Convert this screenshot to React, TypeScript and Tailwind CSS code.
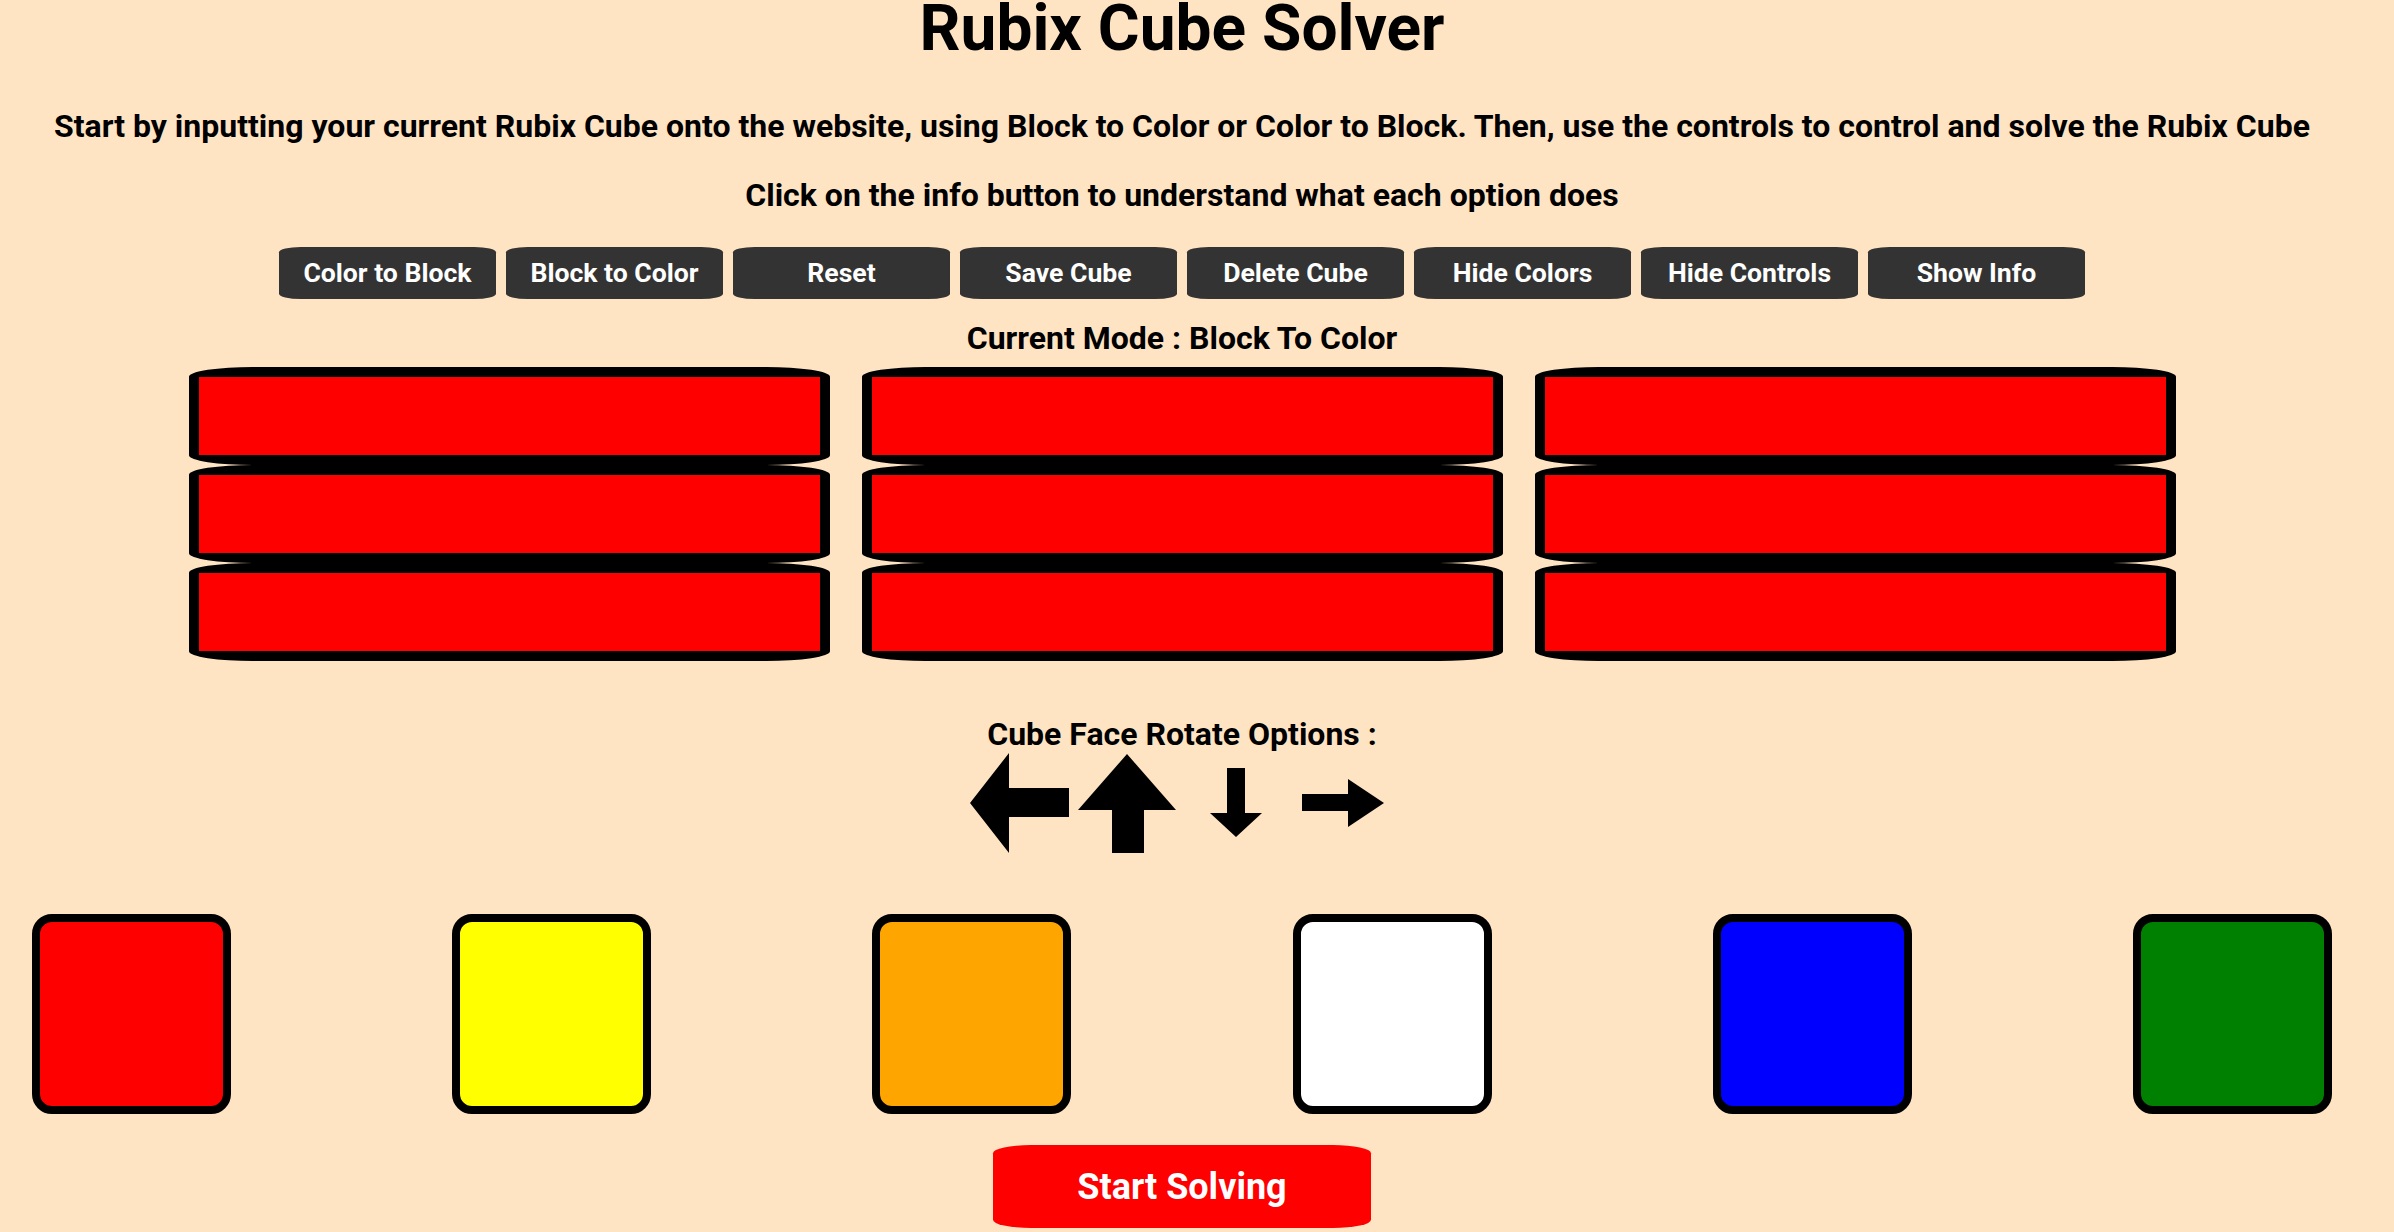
import { useState } from 'react';

const controls = [
  'Color to Block',
  'Block to Color',
  'Reset',
  'Save Cube',
  'Delete Cube',
  'Hide Colors',
  'Hide Controls',
  'Show Info',
];

const palette = ['bg-[#ff0000]', 'bg-[#ffff00]', 'bg-[#ffa500]', 'bg-white', 'bg-[#0000ff]', 'bg-[#008000]'];

const ArrowLeft = () => (
  <svg width="99" height="100" viewBox="0 0 99 100">
    <polygon points="0,50 39,0 39,35 99,35 99,64 39,64 39,100" fill="#000" />
  </svg>
);

const ArrowUp = () => (
  <svg width="98" height="100" viewBox="0 0 98 100">
    <polygon points="49,1 98,57 66,57 66,100 34,100 34,57 0,57" fill="#000" />
  </svg>
);

const ArrowDown = () => (
  <svg width="52" height="100" viewBox="0 0 52 100">
    <polygon points="17,15 35,15 35,60 52,60 26,84 0,60 17,60" fill="#000" />
  </svg>
);

const ArrowRight = () => (
  <svg width="82" height="100" viewBox="0 0 82 100">
    <polygon points="0,41 46,41 46,26 82,50 46,74 46,58 0,58" fill="#000" />
  </svg>
);

const App = () => {
  const [mode] = useState('Block To Color');
  const cube = Array.from({ length: 9 });

  return (
    <div className="min-h-screen w-full bg-[#ffe4c4] font-['Roboto',sans-serif] text-black">
      <div className="w-[2364px] flex flex-col items-center">
        <h1 className="text-[64px] font-bold leading-[58px] h-[58px]">Rubix Cube Solver</h1>

        <p className="mt-[50px] text-[32px] font-bold leading-[36px]">
          Start by inputting your current Rubix Cube onto the website, using Block to Color or Color to Block. Then, use the controls to control and solve the Rubix Cube
        </p>
        <p className="mt-[33px] text-[32px] font-bold leading-[36px]">
          Click on the info button to understand what each option does
        </p>

        {/* Controls */}
        <div className="mt-[34px] flex gap-[10px]">
          {controls.map((c) => (
            <button
              key={c}
              className="w-[217px] h-[52px] bg-[#333333] text-white text-[26.6px] font-bold leading-[30px] rounded-[10%] flex items-center justify-center"
            >
              {c}
            </button>
          ))}
        </div>

        <p className="mt-[21px] text-[32px] font-bold leading-[36px]">Current Mode : {mode}</p>

        {/* Cube face */}
        <div className="mt-[11px] grid grid-cols-[641px_641px_641px] gap-x-[32px]">
          {cube.map((_, i) => (
            <div key={i} className="h-[98px] bg-[#ff0000] border-[10px] border-black rounded-[10%]" />
          ))}
        </div>

        <p className="mt-[55px] text-[32px] font-bold leading-[36px]">Cube Face Rotate Options :</p>
        <div className="mt-[1px] flex items-start pr-[10px]">
          <ArrowLeft />
          <div className="ml-[9px]">
            <ArrowUp />
          </div>
          <div className="ml-[34px]">
            <ArrowDown />
          </div>
          <div className="ml-[40px]">
            <ArrowRight />
          </div>
        </div>

        {/* Color picker */}
        <div className="mt-[61px] w-full px-[32px] flex justify-between">
          {palette.map((p) => (
            <div key={p} className={`w-[199px] h-[200px] border-8 border-black rounded-[20px] ${p}`} />
          ))}
        </div>

        <button className="mt-[31px] w-[378px] h-[83px] bg-[#ff0000] text-white text-[36px] font-bold leading-[42px] rounded-[10%] flex items-center justify-center">
          Start Solving
        </button>
      </div>
    </div>
  );
};

export default App;
